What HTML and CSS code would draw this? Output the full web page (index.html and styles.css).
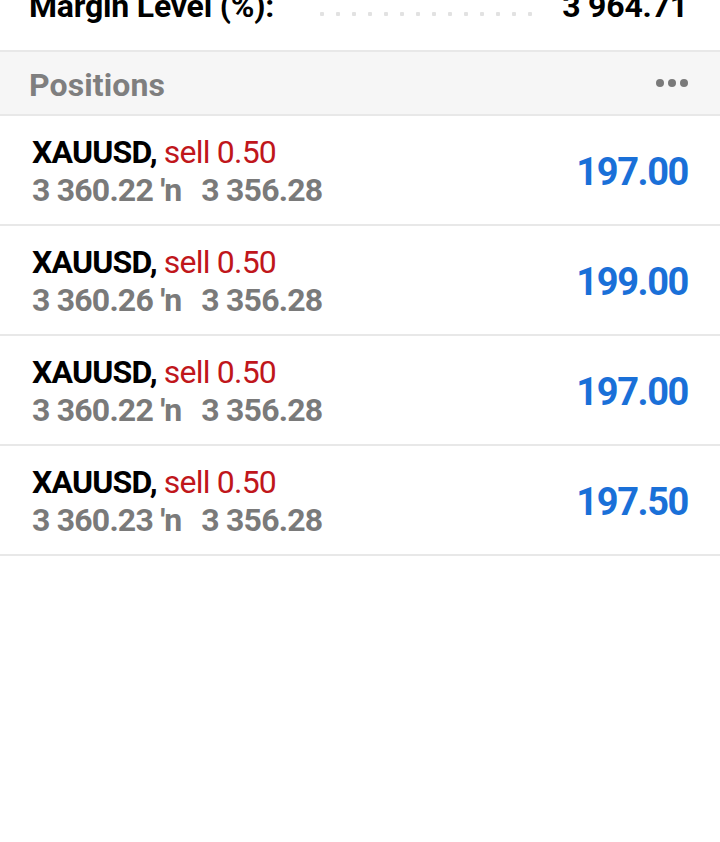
FILE: index.html
```html
<!DOCTYPE html>
<html lang="en">
<head>
    <meta charset="UTF-8">
    <meta name="viewport" content="width=device-width, initial-scale=1.0">
    <title>Trade</title>
    <link rel="stylesheet" href="styles.css">
</head>
<body>
    <!-- Account summary (last line visible) -->
    <div class="summary-row">
        <span class="summary-label">Margin Level (%):</span>
        <span class="summary-dots"></span>
        <span class="summary-value">3 964.71</span>
    </div>

    <!-- Section header -->
    <div class="section-header">
        <span class="section-title">Positions</span>
        <span class="more-dots"><i></i><i></i><i></i></span>
    </div>

    <!-- Open positions -->
    <div class="positions">
        <div class="position">
            <div class="position-info">
                <div class="position-title">XAUUSD, <span class="side-sell">sell 0.50</span></div>
                <div class="position-prices">3 360.22 ′n<span class="arrow-gap"></span>3 356.28</div>
            </div>
            <div class="position-profit">197.00</div>
        </div>
        <div class="position">
            <div class="position-info">
                <div class="position-title">XAUUSD, <span class="side-sell">sell 0.50</span></div>
                <div class="position-prices">3 360.26 ′n<span class="arrow-gap"></span>3 356.28</div>
            </div>
            <div class="position-profit">199.00</div>
        </div>
        <div class="position">
            <div class="position-info">
                <div class="position-title">XAUUSD, <span class="side-sell">sell 0.50</span></div>
                <div class="position-prices">3 360.22 ′n<span class="arrow-gap"></span>3 356.28</div>
            </div>
            <div class="position-profit">197.00</div>
        </div>
        <div class="position">
            <div class="position-info">
                <div class="position-title">XAUUSD, <span class="side-sell">sell 0.50</span></div>
                <div class="position-prices">3 360.23 ′n<span class="arrow-gap"></span>3 356.28</div>
            </div>
            <div class="position-profit">197.50</div>
        </div>
    </div>
</body>
</html>
```

FILE: styles.css
```css
body {
    margin: 0;
    background-color: #fff;
    font-family: Roboto, "Liberation Sans", sans-serif;
    color: #000;
}
/* Summary line cut off at the top */
.summary-row {
    height: 50px;
    display: flex;
    align-items: flex-start;
    padding: 0 32px 0 29px;
    border-bottom: 2px solid #e8e8e8;
}
.summary-label,
.summary-value {
    margin-top: -10px;
    font-size: 32px;
    line-height: 32px;
    font-weight: 700;
    letter-spacing: -0.2px;
}
.summary-dots {
    flex: 1;
    margin: 12px 24px 0 40px;
    height: 4px;
    background-image: radial-gradient(circle, #e2e2e2 2px, transparent 2.5px);
    background-size: 16px 4px;
}
/* Section header */
.section-header {
    height: 58px;
    display: flex;
    align-items: center;
    justify-content: space-between;
    padding: 4px 32px 0 29px;
    background-color: #f6f6f6;
    border-bottom: 2px solid #e8e8e8;
}
.section-title {
    font-size: 32px;
    font-weight: 700;
    color: #7f7f7f;
    letter-spacing: 0.1px;
}
.more-dots {
    display: flex;
    gap: 4px;
    margin-top: -4px;
}
.more-dots i {
    width: 8px;
    height: 8px;
    border-radius: 50%;
    background-color: #7a7a7a;
}
/* Position rows */
.position {
    height: 108px;
    display: flex;
    align-items: center;
    justify-content: space-between;
    padding: 0 32px;
    border-bottom: 2px solid #e8e8e8;
}
.position-info {
    margin-top: 2px;
}
.position-title {
    font-size: 32px;
    line-height: 38px;
    font-weight: 700;
    letter-spacing: -0.8px;
}
.side-sell {
    font-weight: 400;
    color: #c0161b;
}
.position-prices {
    font-size: 32px;
    line-height: 38px;
    font-weight: 700;
    color: #7a7a7a;
    letter-spacing: -0.8px;
}
.arrow-gap {
    display: inline-block;
    width: 20px;
}
.position-profit {
    margin-top: 4px;
    font-size: 38px;
    font-weight: 700;
    color: #1a70d8;
    letter-spacing: -1.4px;
}
```
